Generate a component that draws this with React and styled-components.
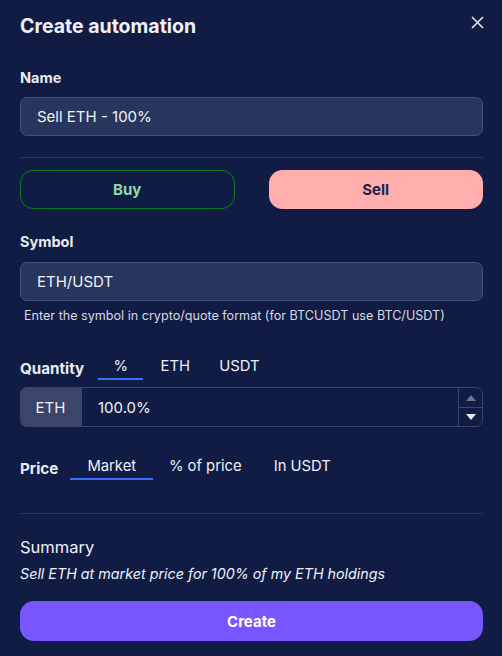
import React from 'react'
import styled, { createGlobalStyle } from 'styled-components'

const Global = createGlobalStyle`
  html, body { margin: 0; padding: 0; background: #111c45; }
  body { font-family: Inter, "Noto Sans", sans-serif; color: #f1f2f6; }
`

const Modal = styled.div`
  width: 502px;
  height: 656px;
  box-sizing: border-box;
  background: #111c45;
  padding: 14px 19px 0 20px;
  position: relative;
`

const Header = styled.div`
  display: flex;
  justify-content: space-between;
  align-items: flex-start;
  height: 50px;
`

const Title = styled.h2`
  margin: 0;
  font-size: 19.5px;
  font-weight: 700;
  color: #eef0f6;
`

const Close = styled.button`
  background: none;
  border: 0;
  padding: 0;
  margin: -2px -4px 0 0;
  color: #e6e8f0;
  display: grid;
  place-items: center;
  width: 20px;
  height: 20px;
`

const Label = styled.div`
  font-size: 14.5px;
  font-weight: 700;
  color: #e9ebf2;
  margin: ${p => p.$mt || 0}px 0 ${p => p.$mb || 0}px;
`

const Input = styled.div`
  height: 39px;
  box-sizing: border-box;
  background: #28355c;
  border: 1px solid #44507a;
  border-radius: 7px;
  display: flex;
  align-items: center;
  padding-left: 16px;
  font-size: 15px;
  color: #f1f2f6;
`

const Divider = styled.hr`
  border: 0;
  border-top: 1px solid #2a3560;
  margin: ${p => p.$mt}px 0 ${p => p.$mb}px;
`

const Sides = styled.div`
  display: grid;
  grid-template-columns: 1fr 1fr;
  gap: 34px;
`

const Side = styled.button`
  height: 39px;
  border-radius: 13px;
  font-family: inherit;
  font-size: 15px;
  font-weight: 700;
  border: 1px solid ${p => (p.$sell ? '#ffadad' : '#0d7a1c')};
  background: ${p => (p.$sell ? '#ffadad' : 'transparent')};
  color: ${p => (p.$sell ? '#1c2550' : '#8fd8a8')};
`

const Help = styled.div`
  font-size: 12.6px;
  color: #d7dae4;
  margin: 7px 0 0 4px;
`

const TabRow = styled.div`
  display: flex;
  align-items: center;
  margin: ${p => p.$mt}px 0 0;
  height: 24px;
`

const TabLabel = styled.div`
  font-size: 15.2px;
  font-weight: 700;
  color: #e9ebf2;
  margin-right: ${p => p.$mr}px;
`

const Tab = styled.div`
  font-size: 14.8px;
  color: #eef0f6;
  width: ${p => p.$w}px;
  text-align: center;
  height: 24px;
  line-height: 20px;
  box-sizing: border-box;
  border-bottom: 2px solid ${p => (p.$active ? '#3f6bff' : 'transparent')};
  margin-right: ${p => p.$mr || 0}px;
`

const Group = styled.div`
  display: flex;
  height: 40px;
  margin-top: 7px;
`

const Addon = styled.div`
  width: 61px;
  background: #3b4568;
  border-radius: 7px 0 0 7px;
  display: grid;
  place-items: center;
  font-size: 15px;
  color: #eef0f6;
`

const NumberBox = styled.div`
  flex: 1;
  display: flex;
  border: 1px solid #3a4570;
  border-radius: 0 7px 7px 0;
`

const NumberValue = styled.div`
  flex: 1;
  display: flex;
  align-items: center;
  padding-left: 16px;
  font-size: 15px;
  color: #f1f2f6;
`

const Spinner = styled.div`
  width: 23px;
  border-left: 1px solid #3a4570;
  display: grid;
  grid-template-rows: 1fr 1fr;
`

const Step = styled.div`
  display: grid;
  place-items: center;
  border-top: ${p => (p.$down ? '1px solid #3a4570' : '0')};
`

const Summary = styled.div`
  font-size: 16.5px;
  color: #eef0f6;
`

const SummaryText = styled.div`
  font-size: 14.3px;
  font-style: italic;
  color: #eef0f6;
  margin-top: 8px;
`

const Create = styled.button`
  width: 100%;
  height: 40px;
  margin-top: 19px;
  border: 0;
  border-radius: 14px;
  background: #7856ff;
  color: #fff;
  font-family: inherit;
  font-size: 15px;
  font-weight: 700;
`

const Tri = ({ up }) => (
  <svg width="12" height="8" viewBox="0 0 12 8">
    <path d={up ? 'M6 1 L11 7 L1 7 Z' : 'M1 1 L11 1 L6 7 Z'} fill={up ? '#6d7594' : '#e8eaf2'} />
  </svg>
)

export default function App() {
  return (
    <>
      <Global />
      <Modal>
        <Header>
          <Title>Create automation</Title>
          <Close aria-label="close">
            <svg width="13" height="13" viewBox="0 0 13 13">
              <path d="M1 1 L12 12 M12 1 L1 12" stroke="#e6e8f0" strokeWidth="1.6" />
            </svg>
          </Close>
        </Header>

        <Label $mt={5} $mb={11}>Name</Label>
        <Input>Sell ETH - 100%</Input>

        <Divider $mt={21} $mb={12} />

        <Sides>
          <Side>Buy</Side>
          <Side $sell>Sell</Side>
        </Sides>

        <Label $mt={24} $mb={12}>Symbol</Label>
        <Input>ETH/USDT</Input>
        <Help>Enter the symbol in crypto/quote format (for BTCUSDT use BTC/USDT)</Help>

        <TabRow $mt={33}>
          <TabLabel $mr={14}>Quantity</TabLabel>
          <Tab $w={45} $active $mr={9}>%</Tab>
          <Tab $w={46} $mr={21}>ETH</Tab>
          <Tab $w={40}>USDT</Tab>
        </TabRow>
        <Group>
          <Addon>ETH</Addon>
          <NumberBox>
            <NumberValue>100.0%</NumberValue>
            <Spinner>
              <Step><Tri up /></Step>
              <Step $down><Tri /></Step>
            </Spinner>
          </NumberBox>
        </Group>

        <TabRow $mt={29}>
          <TabLabel $mr={12}>Price</TabLabel>
          <Tab $w={83} $active $mr={14}>Market</Tab>
          <Tab $w={76} $mr={30}>% of price</Tab>
          <Tab $w={58}>In USDT</Tab>
        </TabRow>

        <Divider $mt={33} $mb={23} />

        <Summary>Summary</Summary>
        <SummaryText>Sell ETH at market price for 100% of my ETH holdings</SummaryText>

        <Create>Create</Create>
      </Modal>
    </>
  )
}
